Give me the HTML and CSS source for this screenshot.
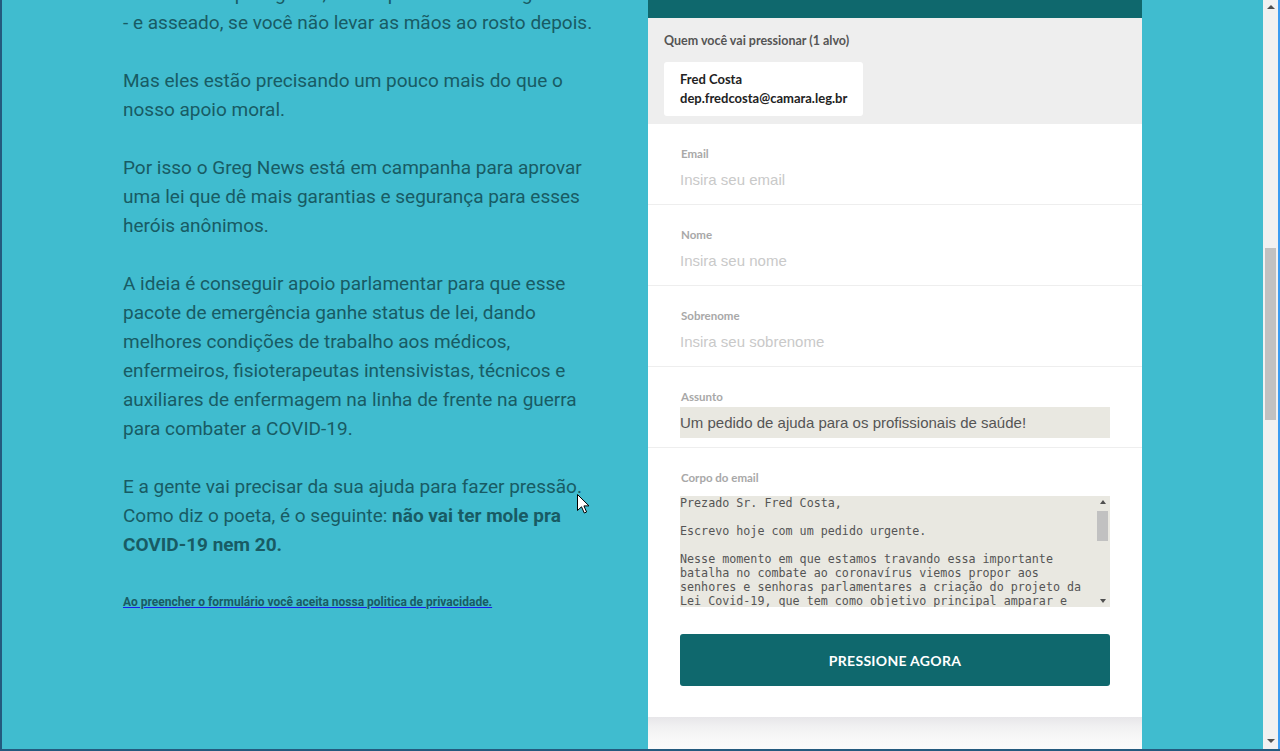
FILE: index.html
```html
<!DOCTYPE html>
<html lang="pt-BR">
<head>
<meta charset="utf-8">
<title>Pressione agora</title>
<link rel="stylesheet" href="styles.css">
</head>
<body>
<div class="window">
  <div class="viewport">
    <div class="container">
      <div class="story">
        <p class="para first">Eles estão lá pela gente, e ficar perto deles é seguro<br>- e asseado, se você não levar as mãos ao rosto depois.</p>
        <p class="para">Mas eles estão precisando um pouco mais do que o nosso apoio moral.</p>
        <p class="para">Por isso o Greg News está em campanha para aprovar uma lei que dê mais garantias e segurança para esses heróis anônimos.</p>
        <p class="para">A ideia é conseguir apoio parlamentar para que esse pacote de emergência ganhe status de lei, dando melhores condições de trabalho aos médicos, enfermeiros, fisioterapeutas intensivistas, técnicos e auxiliares de enfermagem na linha de frente na guerra para combater a COVID-19.</p>
        <p class="para">E a gente vai precisar da sua ajuda para fazer pressão. Como diz o poeta, é o seguinte: <strong>não vai ter mole pra COVID-19 nem 20.</strong></p>
        <p class="privacy"><a href="#" class="privacy-link">Ao preencher o formulário você aceita nossa politica de privacidade.</a></p>
      </div>

      <div class="panel">
        <div class="panel-head"></div>
        <div class="targets">
          <div class="targets-title">Quem você vai pressionar (1 alvo)</div>
          <div class="target-card">
            <div class="target-name">Fred Costa</div>
            <div class="target-mail">dep.fredcosta@camara.leg.br</div>
          </div>
        </div>
        <form class="fields">
          <div class="field">
            <label class="field-label">Email</label>
            <input class="field-input" type="text" placeholder="Insira seu email">
          </div>
          <div class="field">
            <label class="field-label">Nome</label>
            <input class="field-input" type="text" placeholder="Insira seu nome">
          </div>
          <div class="field">
            <label class="field-label">Sobrenome</label>
            <input class="field-input" type="text" placeholder="Insira seu sobrenome">
          </div>
          <div class="field">
            <label class="field-label">Assunto</label>
            <input class="field-input filled" type="text" value="Um pedido de ajuda para os profissionais de saúde!">
          </div>
          <div class="field last">
            <label class="field-label body-label">Corpo do email</label>
            <div class="fake-textarea">
              <div class="ta-text">Prezado Sr. Fred Costa,

Escrevo hoje com um pedido urgente.

Nesse momento em que estamos travando essa importante batalha no combate ao coronavírus viemos propor aos senhores e senhoras parlamentares a criação do projeto da Lei Covid-19, que tem como objetivo principal amparar e proteger os profissionais de saúde.</div>
              <div class="ta-scroll">
                <span class="arrow up small"></span>
                <span class="ta-thumb"></span>
                <span class="ta-spacer"></span>
                <span class="arrow down small"></span>
              </div>
            </div>
            <button type="button" class="submit">PRESSIONE AGORA</button>
          </div>
        </form>
        <div class="panel-foot"></div>
      </div>
    </div>
    <svg class="cursor" width="13" height="20" viewBox="0 0 13 20" aria-hidden="true">
      <path d="M0.5 0.5 L0.5 16.5 L4.5 12.8 L7.3 19 L9.6 18 L6.9 11.9 L12 11.9 Z" fill="#fff" stroke="#000" stroke-width="1" stroke-linejoin="miter"/>
    </svg>
  </div>
  <div class="vscroll">
    <span class="arrow up"></span>
    <span class="vs-gap"></span>
    <span class="vs-thumb"></span>
    <span class="vs-rest"></span>
    <span class="arrow down"></span>
  </div>
  <div class="edge"></div>
</div>
</body>
</html>
```

FILE: styles.css
```css
* { box-sizing: border-box; }

html, body {
  margin: 0;
  padding: 0;
  overflow: hidden;
}

body {
  width: 1280px;
  height: 751px;
  background: #40bccf;
}

.window {
  display: flex;
  width: 1280px;
  height: 751px;
  border-left: 2px solid #245a7e;
  border-bottom: 2px solid #245a7e;
}

.viewport {
  position: relative;
  flex: 1;
  background: #40bccf;
  overflow: hidden;
}

.container {
  width: 1019px;
  margin: 0 auto;
  display: flex;
  justify-content: space-between;
  align-items: flex-start;
}

/* ---------- left story ---------- */
.story {
  width: 482px;
  font-family: Roboto, "Liberation Sans", sans-serif;
  font-size: 19px;
  line-height: 29px;
  color: #185b64;
}

.para {
  margin: 0 0 29px 0;
}

.para.first {
  margin-top: -21px;
}

.para strong {
  font-weight: 700;
}

.privacy {
  margin: 35px 0 0 0;
  font-size: 12px;
  line-height: 16px;
  font-weight: 700;
}

.privacy-link {
  color: #185b64;
  text-decoration: underline;
  text-decoration-color: #1a1aee;
}

/* ---------- right panel ---------- */
.panel {
  width: 494px;
  background: #ffffff;
  font-family: "Source Sans Pro", Lato, "Noto Sans", sans-serif;
}

.panel-head {
  height: 18px;
  background: #0f686d;
}

.targets {
  background: #eeeeee;
  padding: 14px 16px 8px 16px;
}

.targets-title {
  font-size: 12.5px;
  line-height: 18px;
  font-weight: 700;
  color: #555555;
  margin-bottom: 12px;
}

.target-card {
  display: inline-block;
  background: #ffffff;
  border-radius: 3px;
  padding: 8px 16px;
  font-size: 13px;
  line-height: 19px;
  font-weight: 700;
  color: #222222;
}

.fields {
  margin: 0;
}

.field {
  display: flex;
  flex-direction: column;
  padding: 22px 32px 9px 32px;
  border-bottom: 1px solid #eeeeee;
}

.field.last {
  border-bottom: none;
  padding-bottom: 31px;
}

.field-label {
  font-size: 11.5px;
  line-height: 16px;
  font-weight: 700;
  color: #a8a8a8;
  margin-bottom: 2px;
  padding-left: 1px;
}

.field-input {
  height: 31px;
  border: none;
  outline: none;
  padding: 0;
  margin: 0;
  background: transparent;
  font-family: "Liberation Sans", Arial, sans-serif;
  font-size: 15px;
  color: #555555;
}

.field-input::placeholder {
  color: #c9c9c9;
}

.field-input.filled {
  background: #e9e8e1;
}

.body-label {
  margin-bottom: 10px;
}

.fake-textarea {
  display: flex;
  height: 111px;
  background: #e9e8e1;
  overflow: hidden;
}

.ta-text {
  flex: 1;
  overflow: hidden;
  white-space: pre-wrap;
  font-family: "DejaVu Sans Mono", "Liberation Mono", monospace;
  font-size: 11.7px;
  line-height: 14px;
  color: #555555;
}

.ta-scroll {
  width: 15px;
  display: flex;
  flex-direction: column;
  align-items: center;
  padding: 4px 0;
}

.ta-thumb {
  width: 11px;
  height: 30px;
  margin-top: 7px;
  background: #c1c1c1;
}

.ta-spacer {
  flex: 1;
}

.arrow {
  display: block;
  width: 0;
  height: 0;
  border-left: 4px solid transparent;
  border-right: 4px solid transparent;
}

.arrow.up { border-bottom: 4px solid #505050; }
.arrow.down { border-top: 4px solid #505050; }

.arrow.small {
  border-left-width: 3.5px;
  border-right-width: 3.5px;
}

.submit {
  margin-top: 27px;
  height: 52px;
  border: none;
  border-radius: 3px;
  background: #0f686d;
  color: #ffffff;
  font-family: "Source Sans Pro", Lato, "Noto Sans", sans-serif;
  font-size: 14px;
  font-weight: 700;
  letter-spacing: 0.3px;
  cursor: pointer;
}

.panel-foot {
  height: 40px;
  background: linear-gradient(#e7e6e9 0px, #f1f1f2 10px, #f8f8f8 22px, #fbfbfb 40px);
}

/* ---------- cursor overlay ---------- */
.cursor {
  position: absolute;
  left: 575px;
  top: 494px;
}

/* ---------- page scrollbar ---------- */
.vscroll {
  width: 15px;
  background: #f1f1f1;
  display: flex;
  flex-direction: column;
  align-items: center;
  padding: 5px 0 6px 0;
}

.vs-gap {
  height: 239px;
}

.vs-thumb {
  width: 11px;
  height: 172px;
  background: #c1c1c1;
}

.vs-rest {
  flex: 1;
}

.edge {
  width: 2px;
  background: #3a9cf2;
}
```
